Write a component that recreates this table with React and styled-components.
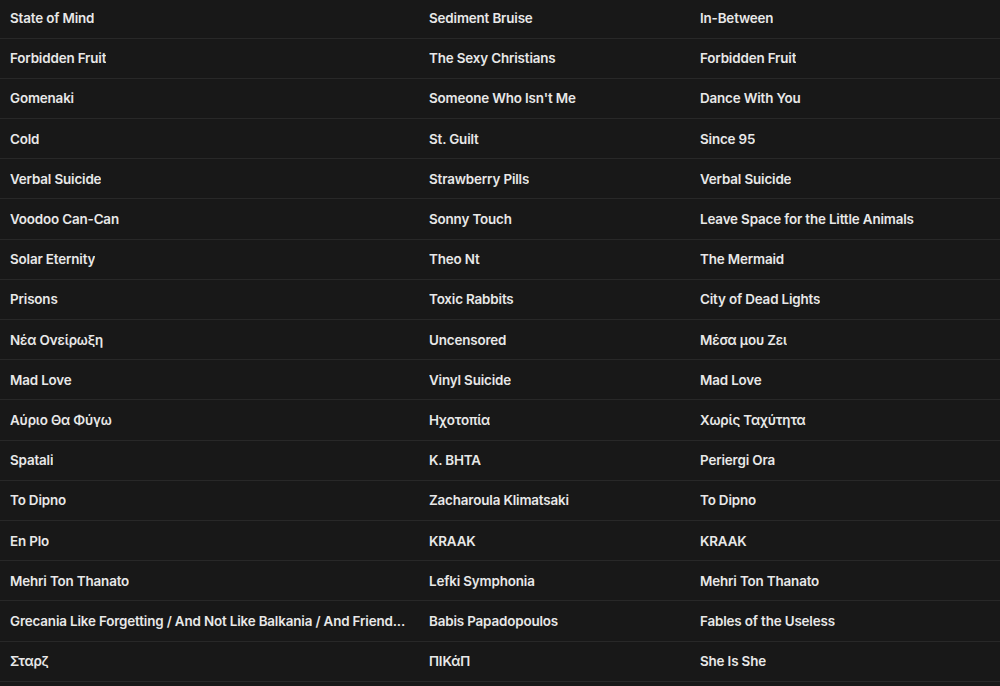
import React from 'react'
import styled, { createGlobalStyle } from 'styled-components'

const GlobalStyle = createGlobalStyle`
  html, body {
    margin: 0;
    padding: 0;
    background: #181818;
    overflow: hidden;
  }
`

const Page = styled.div`
  width: 1000px;
  height: 686px;
  background: #181818;
  overflow: hidden;
`

const Table = styled.div`
  display: grid;
  grid-template-columns: 419px 271px 310px;
  margin-top: -1.5px;
`

const Row = styled.div`
  display: contents;
`

const Cell = styled.div`
  height: 39.2px;
  display: flex;
  align-items: center;
  padding: 0 ${p => (p.$first ? '2px' : '10px')} 0 10px;
  border-bottom: 1px solid #282828;
  color: #e8e8e8;
  font-family: Inter, 'Noto Sans', sans-serif;
  font-weight: 600;
  font-size: 13.4px;
  letter-spacing: -0.15px;
  min-width: 0;
  span {
    white-space: nowrap;
    overflow: hidden;
    text-overflow: ellipsis;
  }
`

const rows = [
  ['State of Mind', 'Sediment Bruise', 'In-Between'],
  ['Forbidden Fruit', 'The Sexy Christians', 'Forbidden Fruit'],
  ['Gomenaki', "Someone Who Isn't Me", 'Dance With You'],
  ['Cold', 'St. Guilt', 'Since 95'],
  ['Verbal Suicide', 'Strawberry Pills', 'Verbal Suicide'],
  ['Voodoo Can-Can', 'Sonny Touch', 'Leave Space for the Little Animals'],
  ['Solar Eternity', 'Theo Nt', 'The Mermaid'],
  ['Prisons', 'Toxic Rabbits', 'City of Dead Lights'],
  ['Νέα Ονείρωξη', 'Uncensored', 'Μέσα μου Ζει'],
  ['Mad Love', 'Vinyl Suicide', 'Mad Love'],
  ['Αύριο Θα Φύγω', 'Ηχοτοπία', 'Χωρίς Ταχύτητα'],
  ['Spatali', 'K. BHTA', 'Periergi Ora'],
  ['To Dipno', 'Zacharoula Klimatsaki', 'To Dipno'],
  ['En Plo', 'KRAAK', 'KRAAK'],
  ['Mehri Ton Thanato', 'Lefki Symphonia', 'Mehri Ton Thanato'],
  ['Grecania Like Forgetting / And Not Like Balkania / And Friend...', 'Babis Papadopoulos', 'Fables of the Useless'],
  ['Σταρζ', 'ΠΙΚάΠ', 'She Is She'],
]

export default function App() {
  return (
    <Page>
      <GlobalStyle />
      <Table>
        {rows.map((r, i) => (
          <Row key={i}>
            {r.map((c, j) => (
              <Cell key={j} $first={j === 0}>
                <span>{c}</span>
              </Cell>
            ))}
          </Row>
        ))}
      </Table>
    </Page>
  )
}
